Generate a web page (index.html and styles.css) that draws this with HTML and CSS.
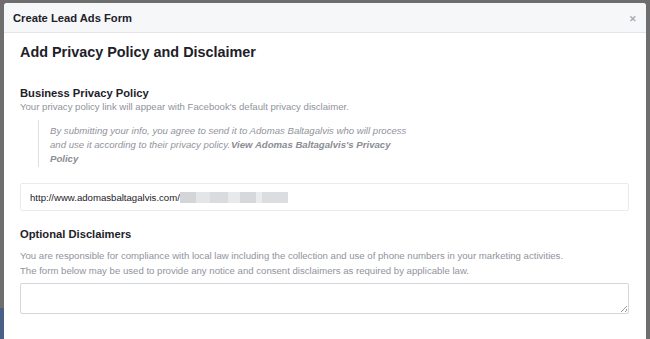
FILE: index.html
```html
<!DOCTYPE html>
<html>
<head>
<meta charset="utf-8">
<link rel="stylesheet" href="styles.css">
</head>
<body>
<div class="backdrop">
  <div class="dialog">
    <div class="dialog-header">
      <span class="dialog-title">Create Lead Ads Form</span>
      <span class="close">&#x2715;</span>
    </div>
    <div class="dialog-body">
      <h2 class="heading">Add Privacy Policy and Disclaimer</h2>
      <div class="section">
        <div class="section-title">Business Privacy Policy</div>
        <div class="section-desc">Your privacy policy link will appear with Facebook's default privacy disclaimer.</div>
        <blockquote class="quote">By submitting your info, you agree to send it to Adomas Baltagalvis who will process and use it according to their privacy policy.<b>View Adomas Baltagalvis's Privacy Policy</b></blockquote>
        <div class="input">
          <span class="url">http://www.adomasbaltagalvis.com/</span><span class="blur"><i class="b1"></i><i class="b2"></i><i class="b3"></i><i class="b4"></i><i class="b5"></i><i class="b6"></i><i class="b7"></i></span>
        </div>
      </div>
      <div class="section section-2">
        <div class="section-title">Optional Disclaimers</div>
        <div class="section-desc lines">You are responsible for compliance with local law including the collection and use of phone numbers in your marketing activities.<br>The form below may be used to provide any notice and consent disclaimers as required by applicable law.</div>
        <div class="textarea"><span class="grip"></span></div>
      </div>
    </div>
  </div>
</div>
</body>
</html>
```
FILE: styles.css
```css
html, body {
  margin: 0;
  padding: 0;
  height: 100%;
  overflow: hidden;
}
body {
  background: #6e6e6e;
  font-family: "Liberation Sans", Arial, Helvetica, sans-serif;
}
.backdrop {
  padding: 3px 4px 0 4px;
  height: 100%;
  box-sizing: border-box;
  background: linear-gradient(to bottom, #6e6e6e 0, #6e6e6e 308px, #4a5f86 308px, #4a5f86 339px);
  background-size: 4px 100%;
  background-repeat: no-repeat;
  background-color: #6e6e6e;
}
.dialog {
  background: #fff;
  border-radius: 3px 3px 0 0;
  height: 340px;
  overflow: hidden;
}
.dialog-header {
  height: 29px;
  background: #f6f7f9;
  border-bottom: 1px solid #e5e5e5;
  border-radius: 3px 3px 0 0;
  display: flex;
  align-items: center;
  justify-content: space-between;
  padding: 0 9px 0 9px;
}
.dialog-title {
  font-size: 11.2px;
  font-weight: bold;
  color: #1d2129;
}
.close {
  font-size: 9px;
  color: #a8abb0;
  font-weight: bold;
  padding-top: 2px;
}
.dialog-body {
  padding: 0 17px 0 16px;
}
.heading {
  margin: 10px 0 0 0;
  font-size: 14.4px;
  line-height: 18px;
  font-weight: bold;
  color: #1d2129;
}
.section {
  margin-top: 25px;
}
.section-title {
  font-size: 11.2px;
  line-height: 14px;
  font-weight: bold;
  color: #1d2129;
}
.section-desc {
  font-size: 9.6px;
  line-height: 14px;
  color: #90949c;
}
.lines {
  line-height: 15px;
  margin-top: 7px;
}
.quote {
  margin: 6px 0 0 18px;
  padding: 4px 0 1px 11px;
  border-left: 1px solid #dddfe2;
  font-size: 9.6px;
  line-height: 14px;
  font-style: italic;
  color: #90949c;
  width: 362px;
}
.quote b {
  color: #8a8d94;
  margin-left: 1px;
}
.input {
  margin-top: 16px;
  height: 26px;
  border: 1px solid #e9ebee;
  border-radius: 2px;
  display: flex;
  align-items: center;
  padding-left: 9px;
  font-size: 9.6px;
  color: #1d2129;
}
.blur {
  display: flex;
  height: 11px;
  margin-left: 0;
}
.blur i {
  display: block;
  height: 11px;
}
.b1 { width: 16px; background: #d4d5d8; }
.b2 { width: 14px; background: #e4e5e7; }
.b3 { width: 18px; background: #dadbde; }
.b4 { width: 12px; background: #e8e9eb; }
.b5 { width: 16px; background: #d7d8db; }
.b6 { width: 6px; background: #eaebed; }
.b7 { width: 26px; background: #dcdde0; }
.section-2 {
  margin-top: 16px;
}
.textarea {
  margin-top: 5px;
  height: 29px;
  border: 1px solid #d3d6db;
  border-radius: 2px;
  position: relative;
}
.grip {
  position: absolute;
  right: 1px;
  bottom: 1px;
  width: 6px;
  height: 6px;
  background: linear-gradient(135deg, transparent 45%, #999 45%, #999 55%, transparent 55%, transparent 75%, #999 75%, #999 85%, transparent 85%);
}
```
